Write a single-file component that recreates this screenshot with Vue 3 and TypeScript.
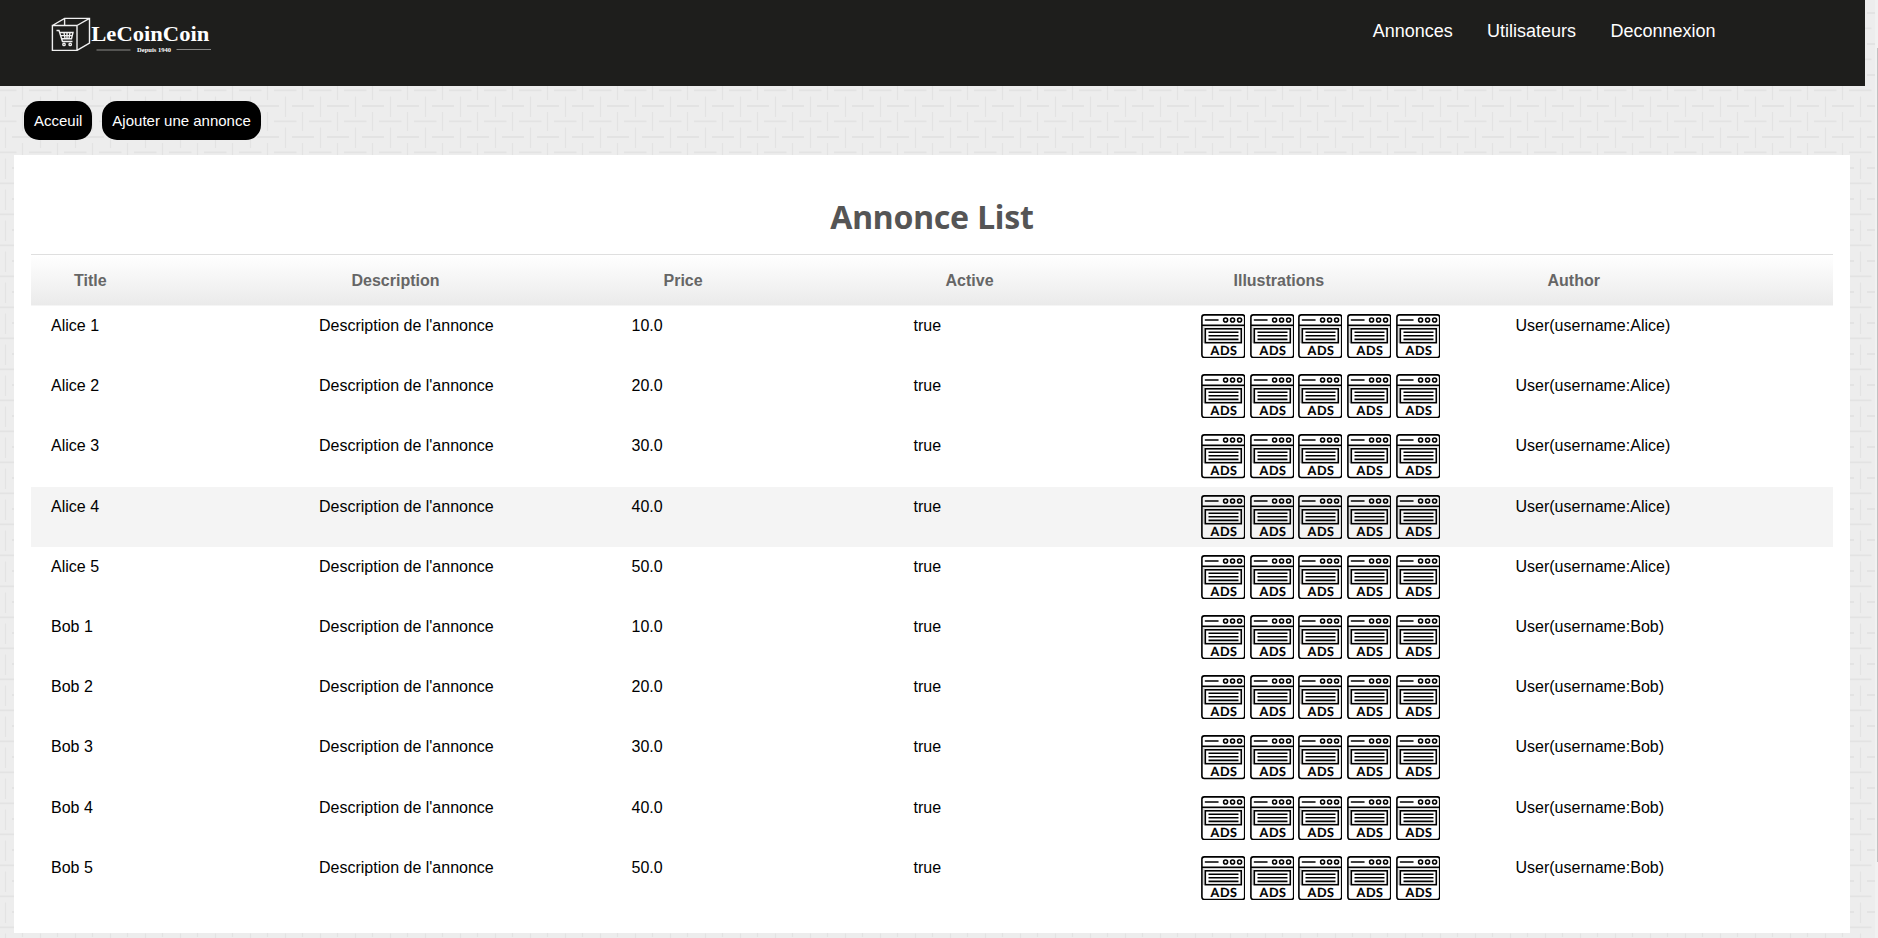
<script setup lang="ts">
interface Annonce {
  title: string
  price: string
  author: string
  hovered: boolean
}

const annonces: Annonce[] = ['Alice', 'Bob'].flatMap((author) =>
  [1, 2, 3, 4, 5].map((n) => ({
    title: `${author} ${n}`,
    price: `${n * 10}.0`,
    author: `User(username:${author})`,
    hovered: author === 'Alice' && n === 4,
  })),
)

const columns: string[] = ['Title', 'Description', 'Price', 'Active', 'Illustrations', 'Author']
const links: string[] = ['Annonces', 'Utilisateurs', 'Deconnexion']
</script>

<template>
  <div class="page">
    <svg class="pattern" width="1875" height="938" aria-hidden="true">
      <defs>
        <pattern id="weave" width="35" height="31" patternUnits="userSpaceOnUse">
          <g stroke="#e3e3e3" stroke-width="1.4">
            <path d="M5.5 3.5V24M22.5 19V31M22.5 0V7" />
            <path d="M12 13H34M29 28.3H35M0 28.3H16.5" stroke-width="1.8" />
          </g>
        </pattern>
      </defs>
      <rect width="1875" height="938" fill="#ededed" />
      <rect width="1875" height="938" fill="url(#weave)" />
    </svg>
    <div class="content">
      <header class="topbar">
        <svg class="logo" width="170" height="46" viewBox="46 12 170 46">
          <g fill="none" stroke="#f0f0f0" stroke-width="1.4">
            <path d="M52.4 25.5H77V50.4H52.4ZM52.4 25.5L64.6 18.4H89.5V43L77 50.4M77 25.5L89.5 18.4M64.6 18.4V25.5" />
            <path d="M56.5 30.5H59L62.5 41.5H72.5M60 32.5H73L71.5 38.8H61.5M60.5 35.6H72M64 32.5L65 38.5M67 32.5V38.5M70 32.5L69 38.5" />
            <circle cx="64" cy="44.4" r="1.2" />
            <circle cx="70.2" cy="44.4" r="1.2" />
          </g>
          <text x="91.3" y="40.7" class="brand" textLength="118" lengthAdjust="spacingAndGlyphs">LeCoinCoin</text>
          <path d="M96.5 50H130.5M176.5 49.5H211" stroke="#8a8a88" stroke-width="1.2" />
          <text x="137" y="52" class="since" textLength="34" lengthAdjust="spacingAndGlyphs">Depuis 1940</text>
        </svg>
        <nav class="nav">
          <a v-for="link in links" :key="link">{{ link }}</a>
        </nav>
      </header>
      <div class="actions">
        <a class="pill">Acceuil</a>
        <a class="pill">Ajouter une annonce</a>
      </div>
      <main class="card">
        <h1>Annonce List</h1>
        <table>
          <colgroup>
            <col class="c1" /><col class="c2" /><col class="c3" /><col class="c4" /><col class="c5" /><col class="c6" />
          </colgroup>
          <thead>
            <tr>
              <th v-for="column in columns" :key="column">{{ column }}</th>
            </tr>
          </thead>
          <tbody>
            <tr v-for="annonce in annonces" :key="annonce.title" :class="{ hovered: annonce.hovered }">
              <td>{{ annonce.title }}</td>
              <td>Description de l'annonce</td>
              <td>{{ annonce.price }}</td>
              <td>true</td>
              <td>
                <div class="ads">
                  <svg v-for="n in 5" :key="n" class="ad" viewBox="0 0 44.2 44.2">
                    <g fill="none" stroke="#000">
                      <path d="M1.5 12.6H42.7M2.8 13V29" stroke="#ccc" stroke-width="1.2" />
                      <rect x="0.9" y="0.9" width="42.8" height="42.6" rx="2.4" stroke-width="1.6" />
                      <path d="M1 11.2H43.2" stroke-width="1.6" />
                      <path d="M4.4 6H17" stroke-width="1.6" stroke-linecap="round" />
                      <circle cx="24.6" cy="6" r="2" stroke-width="1.6" />
                      <circle cx="31.6" cy="6" r="2" stroke-width="1.6" />
                      <circle cx="38.6" cy="6" r="2" stroke-width="1.6" />
                      <rect x="4.3" y="14.8" width="36" height="13.9" stroke-width="1.6" />
                      <path d="M7.5 18.2H37.5M7.5 21.8H37.5M7.5 25.4H37.5" stroke-width="1.6" />
                    </g>
                    <text x="9.6" y="40.6" textLength="26.4" lengthAdjust="spacing">ADS</text>
                  </svg>
                </div>
              </td>
              <td>{{ annonce.author }}</td>
            </tr>
          </tbody>
        </table>
      </main>
    </div>
    <div class="scrollbar"><div class="thumb"></div></div>
  </div>
</template>

<style>
html,
body {
  margin: 0;
  overflow: hidden;
}
</style>

<style scoped>
.page {
  position: relative;
  display: flex;
  width: 1878px;
  height: 938px;
  overflow: hidden;
  font-family: 'Liberation Sans', Arial, sans-serif;
  font-size: 16px;
  color: #000;
}
.pattern {
  position: absolute;
  top: 0;
  left: 0;
}
.content {
  position: relative;
  width: 1875px;
  flex: none;
}
.topbar {
  box-sizing: border-box;
  display: flex;
  justify-content: space-between;
  width: 1865px;
  height: 86px;
  padding: 12px 149.5px 0 46px;
  background: #1e1e1c;
}
.logo {
  display: block;
}
.brand {
  font: bold 22px 'Liberation Serif', serif;
  fill: #fff;
}
.since {
  font: bold 6px 'Liberation Serif', serif;
  fill: #fff;
}
.nav {
  display: flex;
  gap: 34.3px;
  padding-top: 9px;
  font-size: 18px;
  line-height: 21px;
  color: #fff;
}
.actions {
  display: flex;
  gap: 10px;
  padding: 15px 0 15px 24px;
}
.pill {
  box-sizing: border-box;
  height: 39px;
  padding: 0 10px;
  border-radius: 15px;
  background: #000;
  color: #fff;
  font-size: 15px;
  line-height: 39px;
}
.card {
  box-sizing: border-box;
  width: 1836px;
  height: 778px;
  margin-left: 14px;
  padding: 41px 17px 0;
  background: #fff;
}
h1 {
  margin: 0;
  height: 58px;
  font: bold 32px/42px 'Noto Sans', 'Open Sans', sans-serif;
  letter-spacing: -0.2px;
  text-align: center;
  color: #555;
}
table {
  width: 1802px;
  table-layout: fixed;
  border-collapse: separate;
  border-spacing: 0;
  border-top: 1px solid #dfdfdf;
}
.c1 { width: 268px; }
.c2 { width: 312px; }
.c3 { width: 282px; }
.c4 { width: 288px; }
.c5 { width: 314px; }
.c6 { width: 338px; }
thead tr {
  background: linear-gradient(to bottom, #fff, #eaeaea);
}
th {
  box-sizing: border-box;
  height: 51px;
  padding: 2px 0 0 52.5px;
  border-bottom: 1px solid #f5f5f5;
  text-align: left;
  color: #666;
}
th:first-child {
  padding-left: 43px;
}
td {
  box-sizing: border-box;
  height: 60.2px;
  padding: 10px 0 0 20px;
  line-height: 20px;
  vertical-align: top;
}
td:nth-child(5) {
  padding-top: 8px;
}
td:nth-child(3),
td:nth-child(4),
td:nth-child(6) {
  padding-left: 20.5px;
}
.hovered {
  background: #f4f4f4;
}
.ads {
  display: flex;
  gap: 4.45px;
}
.ad {
  width: 44.2px;
  height: 44.2px;
}
.ad text {
  font: bold 12.6px Lato, sans-serif;
  text-rendering: geometricPrecision;
  stroke: #000;
  stroke-width: 0.15px;
}
.scrollbar {
  position: relative;
  box-sizing: border-box;
  flex: none;
  width: 3px;
  height: 938px;
  padding: 48px 0 0 2px;
  background: #f1f1f1;
}
.thumb {
  width: 1px;
  height: 814px;
  background: #c1c1c1;
}
</style>
